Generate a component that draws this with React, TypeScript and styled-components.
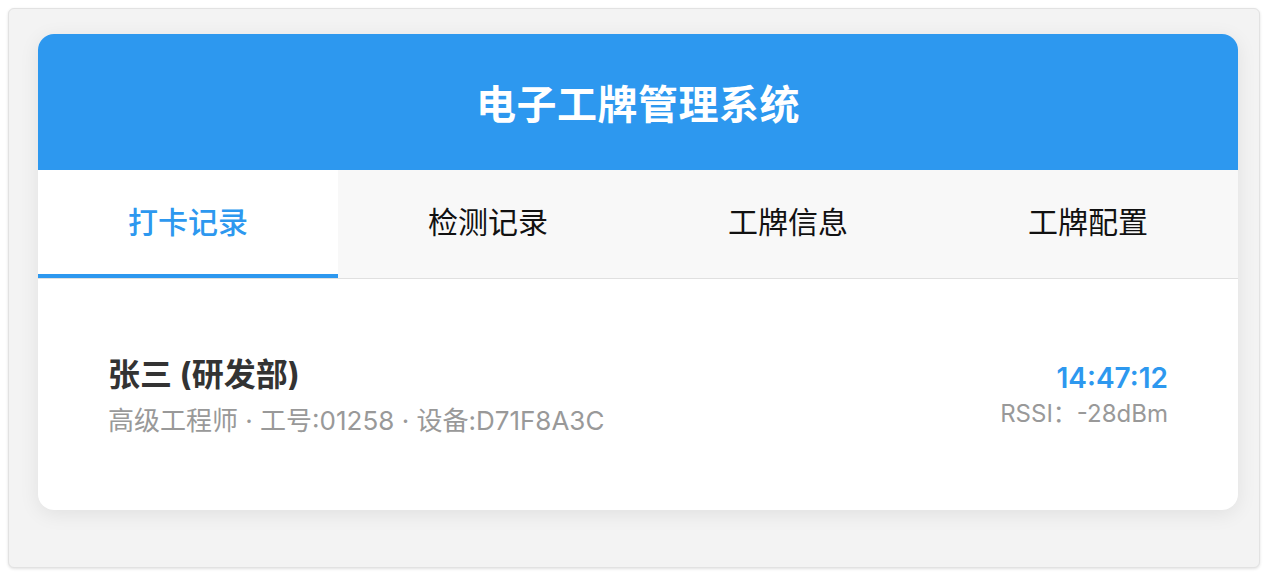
import React from 'react';
import styled, { createGlobalStyle } from 'styled-components';

const GlobalStyle = createGlobalStyle`
  html, body {
    margin: 0;
    padding: 0;
    background: #fff;
  }
  body {
    padding: 8px;
    font-family: Inter, "Noto Sans CJK SC", sans-serif;
  }
`;

const Frame = styled.div`
  box-sizing: border-box;
  height: 560px;
  background: #f3f3f3;
  border: 1px solid #e2e2e2;
  border-radius: 6px;
  box-shadow: 0 1px 3px rgba(0, 0, 0, 0.12);
  padding: 25px 21px 0 29px;
`;

const Card = styled.div`
  background: #fff;
  border-radius: 16px;
  overflow: hidden;
  box-shadow: 0 4px 20px rgba(0, 0, 0, 0.08);
`;

const Header = styled.div`
  height: 136px;
  background: #2d98ef;
  display: flex;
  align-items: center;
  justify-content: center;
`;

const Title = styled.h1`
  margin: 0;
  color: #fff;
  font-size: 40px;
  font-weight: 700;
  font-family: "Noto Sans CJK SC", sans-serif;
  letter-spacing: 0.5px;
`;

const Tabs = styled.div`
  display: grid;
  grid-template-columns: repeat(4, 1fr);
  border-bottom: 1px solid #e0e0e0;
`;

const Tab = styled.div<{ $active?: boolean }>`
  height: 108px;
  box-sizing: border-box;
  display: flex;
  align-items: center;
  justify-content: center;
  padding-bottom: 4px;
  font-family: "Noto Sans CJK SC", sans-serif;
  font-size: 30px;
  font-weight: ${p => (p.$active ? 500 : 400)};
  color: ${p => (p.$active ? '#2d98ef' : '#111')};
  background: ${p => (p.$active ? '#fff' : '#f8f8f8')};
  border-bottom: 4px solid ${p => (p.$active ? '#2d98ef' : 'transparent')};
`;

const Content = styled.div`
  height: 231px;
  box-sizing: border-box;
  padding: 4px 70px 0;
  display: flex;
  align-items: center;
`;

const Record = styled.div`
  flex: 1;
  display: flex;
  justify-content: space-between;
  align-items: center;
`;

const Person = styled.div`
  display: flex;
  flex-direction: column;
  gap: 11px;
`;

const Name = styled.div`
  font-size: 32px;
  line-height: 38px;
  font-weight: 700;
  color: #333;
`;

const Meta = styled.div`
  font-size: 26px;
  line-height: 32px;
  color: #999;
`;

const Stamp = styled.div`
  display: flex;
  flex-direction: column;
  align-items: flex-end;
  gap: 5px;
  margin-bottom: 4px;
`;

const Time = styled.div`
  font-size: 28px;
  line-height: 34px;
  font-weight: 600;
  color: #2d98ef;
`;

const Rssi = styled.div`
  font-size: 24px;
  line-height: 28px;
  color: #999;
`;

const tabs = ['打卡记录', '检测记录', '工牌信息', '工牌配置'];

export default function App() {
  return (
    <>
      <GlobalStyle />
      <Frame>
        <Card>
          <Header>
            <Title>电子工牌管理系统</Title>
          </Header>
          <Tabs>
            {tabs.map((t, i) => (
              <Tab key={t} $active={i === 0}>
                {t}
              </Tab>
            ))}
          </Tabs>
          <Content>
            <Record>
              <Person>
                <Name>张三 (研发部)</Name>
                <Meta>高级工程师 · 工号:01258 · 设备:D71F8A3C</Meta>
              </Person>
              <Stamp>
                <Time>14:47:12</Time>
                <Rssi>RSSI：-28dBm</Rssi>
              </Stamp>
            </Record>
          </Content>
        </Card>
      </Frame>
    </>
  );
}
